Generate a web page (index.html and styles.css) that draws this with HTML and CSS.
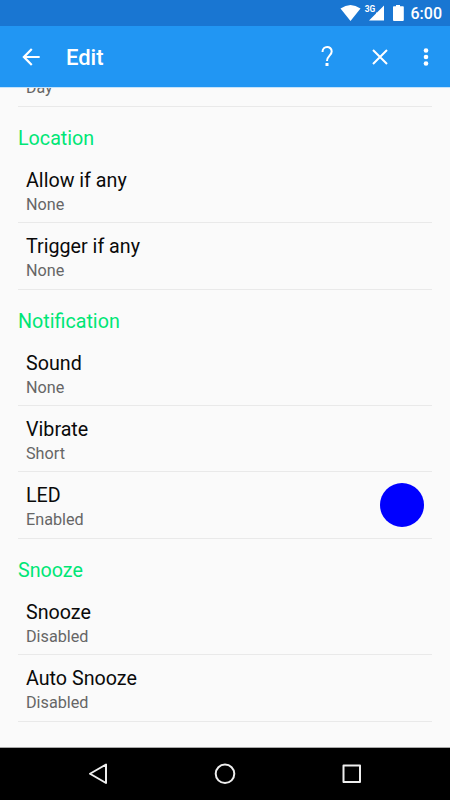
FILE: index.html
```html
<!DOCTYPE html>
<html lang="en">
<head>
<meta charset="utf-8">
<title>Edit</title>
<link rel="stylesheet" href="styles.css">
</head>
<body>
<div class="screen">
  <div class="status">
    <svg class="status-icons" width="70" height="26" viewBox="336 0 70 26" fill="#fff">
      <path d="M340.500 8.500Q350.500 1.500 360.500 8.500L350.500 21Z"/>
      <path d="M384 5.500V20.500H369L376 13.500V12.500H377Z"/>
      <path d="M396 5h4v1.300h3a.8.8 0 0 1 .8.8V20a1 1 0 0 1-1 1h-8.800a1 1 0 0 1-1-1V7.100a.8.8 0 0 1 .8-.8H396Z"/>
      <text class="network" x="364.700" y="12.300" textLength="10.500" lengthAdjust="spacingAndGlyphs">3G</text>
    </svg>
    <span class="clock">6:00</span>
  </div>
  <header class="appbar">
    <svg class="back" width="26" height="26" viewBox="0 0 24 24" fill="#fff"><path d="M20 11H7.830l5.590-5.590L12 4l-8 8 8 8 1.410-1.410L7.830 13H20z"/></svg>
    <h1 class="title">Edit</h1>
    <svg class="actions" width="140" height="60" viewBox="310 27 140 60" fill="none" stroke="#fff" stroke-width="2">
      <path d="M322.500 52C322.500 45.500 331.700 45.500 331.700 51.500C331.700 55.500 327 56 327 61"/>
      <path d="M327 63v3" stroke-width="3"/>
      <path d="M373 50l14 14M387 50l-14 14"/>
      <g fill="#fff" stroke="none"><circle cx="426" cy="50.500" r="2.300"/><circle cx="426" cy="57" r="2.300"/><circle cx="426" cy="63.500" r="2.300"/></g>
    </svg>
  </header>
  <main class="content">
    <div class="partial"><span>Day</span></div>
    <section><h2>Location</h2>
      <div class="row"><div class="name">Allow if any</div><div class="value">None</div></div>
      <div class="row"><div class="name">Trigger if any</div><div class="value">None</div></div>
    </section>
    <section><h2>Notification</h2>
      <div class="row"><div class="name">Sound</div><div class="value">None</div></div>
      <div class="row"><div class="name">Vibrate</div><div class="value">Short</div></div>
      <div class="row led"><div><div class="name">LED</div><div class="value">Enabled</div></div><span class="swatch"></span></div>
    </section>
    <section><h2>Snooze</h2>
      <div class="row"><div class="name">Snooze</div><div class="value">Disabled</div></div>
      <div class="row"><div class="name">Auto Snooze</div><div class="value">Disabled</div></div>
    </section>
  </main>
  <nav class="nav">
    <svg width="450" height="52" viewBox="0 748 450 52" fill="none" stroke="#eee" stroke-width="2"><path d="M106 764.500v18.500L90 773.750ZM343.500 765.500h16.500v16.500h-16.500Z" stroke-linejoin="round"/><circle cx="225" cy="773.800" r="9.300"/></svg>
  </nav>
</div>
</body>
</html>
```
FILE: styles.css
```css
* { box-sizing: border-box; }
body { margin: 0; font-family: Roboto, sans-serif; }
.screen { width: 450px; height: 800px; display: flex; flex-direction: column; overflow: hidden; background: #fafafa; }
.status { height: 26px; flex: none; background: #1976d2; color: #fff; display: flex; justify-content: flex-end; padding-right: 8px; }
.status-icons { margin-right: 5px; }
.network { font: 700 8.500px Roboto, sans-serif; }
.clock { font-size: 16px; font-weight: 500; line-height: 28px; }
.appbar { height: 61px; flex: none; background: #2196f3; color: #fff; display: flex; align-items: center; padding-left: 18px; }
.title { margin: 2px 0 0 22px; font-size: 22px; font-weight: 500; line-height: 30px; }
.actions { margin-left: auto; }
.content { height: 661px; flex: none; overflow: hidden; padding: 0 18px; border-top: 1px solid #c4e3fb; border-bottom: 1px solid #a8a8a8; }
.partial { height: 18.700px; display: flex; align-items: flex-end; border-bottom: 1px solid #e9e9e9; padding: 0 8px 7.700px; font-size: 16px; line-height: 20px; color: #666; }
h2 { height: 50.200px; margin: 0; padding-top: 19px; font-size: 19.700px; font-weight: 400; line-height: 26px; color: #00e676; }
.row { height: 66.350px; border-bottom: 1px solid #e9e9e9; padding: 10.800px 8px 0; }
.name { font-size: 19.700px; line-height: 26px; color: #0a0a0a; }
.value { font-size: 16.200px; line-height: 22px; color: #666; }
.led { display: flex; justify-content: space-between; }
.swatch { width: 44px; height: 44px; margin-top: -.3px; border-radius: 50%; background: #00f; }
.nav { height: 52px; flex: none; background: #000; }
```
